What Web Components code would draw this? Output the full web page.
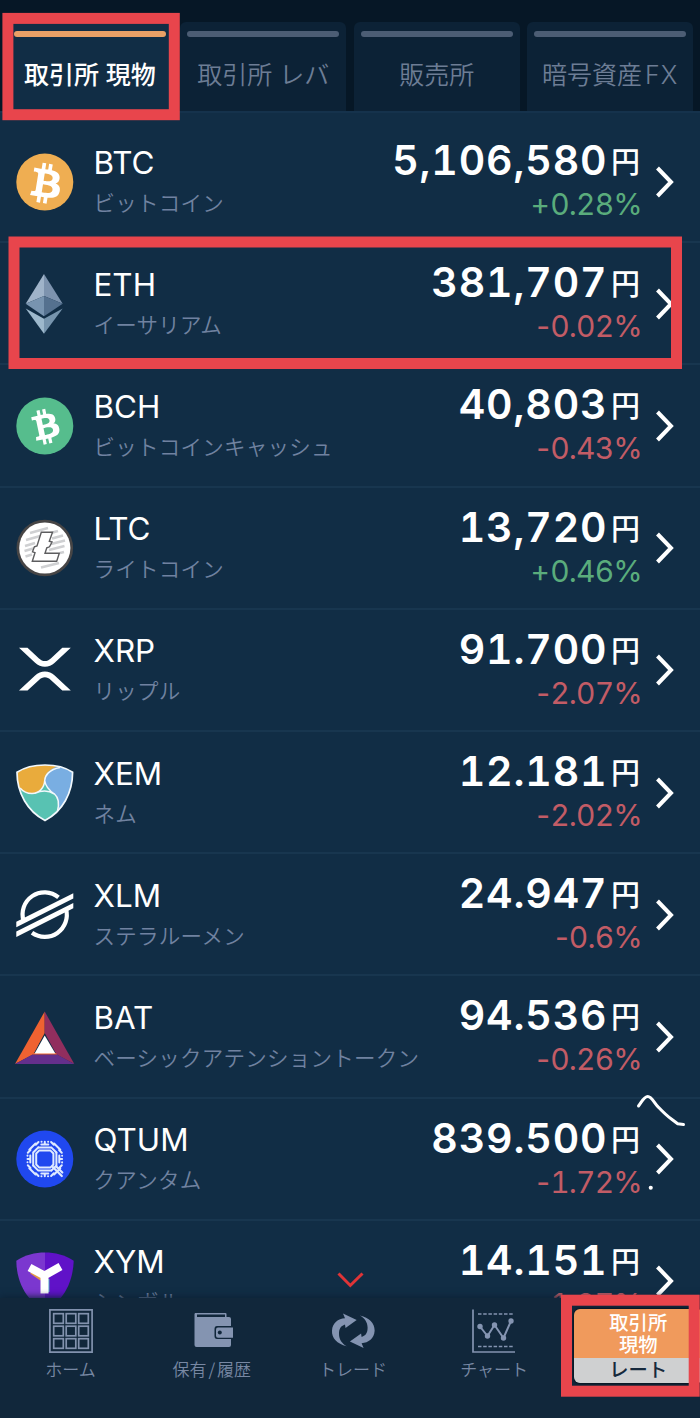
<!DOCTYPE html>
<html lang="ja">
<head>
<meta charset="UTF-8">
<title>レート</title>
<style>
    html, body { margin:0; padding:0; }
    body {
        width:700px;
        height:1418px;
        overflow:hidden;
        background:#112d45;
        color:#fff;
        font-family:Inter, "Noto Sans CJK JP", sans-serif;
    }
</style>
</head>
<body>
<rate-app>
    <rate-tab slot="tabs" active>取引所 現物</rate-tab>
    <rate-tab slot="tabs">取引所 レバ</rate-tab>
    <rate-tab slot="tabs">販売所</rate-tab>
    <rate-tab slot="tabs">暗号資産<span style="letter-spacing:1px;margin-left:3px">FX</span></rate-tab>

    <rate-row code="BTC" name="ビットコイン" price="5,106,580" rate="+0.28%"></rate-row>
    <rate-row code="ETH" name="イーサリアム" price="381,707" rate="-0.02%"></rate-row>
    <rate-row code="BCH" name="ビットコインキャッシュ" price="40,803" rate="-0.43%"></rate-row>
    <rate-row code="LTC" name="ライトコイン" price="13,720" rate="+0.46%"></rate-row>
    <rate-row code="XRP" name="リップル" price="91.700" rate="-2.07%"></rate-row>
    <rate-row code="XEM" name="ネム" price="12.181" rate="-2.02%"></rate-row>
    <rate-row code="XLM" name="ステラルーメン" price="24.947" rate="-0.6%"></rate-row>
    <rate-row code="BAT" name="ベーシックアテンショントークン" price="94.536" rate="-0.26%"></rate-row>
    <rate-row code="QTUM" name="クアンタム" price="839.500" rate="-1.72%"></rate-row>
    <rate-row code="XYM" name="シンボル" price="14.151" rate="-1.27%"></rate-row>

    <nav-item slot="nav" icon="home">ホーム</nav-item>
    <nav-item slot="nav" icon="wallet">保有<span style="margin:0 2px">/</span>履歴</nav-item>
    <nav-item slot="nav" icon="trade">トレード</nav-item>
    <nav-item slot="nav" icon="chart">チャート</nav-item>
    <mode-button slot="nav"><span>取引所</span><span>現物</span><span slot="mode">レート</span></mode-button>

    <mark-layer slot="marks"></mark-layer>
</rate-app>

<script>
const BITCOIN = 'M23.189 14.02c.314-2.096-1.283-3.223-3.465-3.975l.708-2.84-1.728-.43-.69 2.765c-.454-.114-.92-.22-1.385-.326l.695-2.783L15.596 6l-.708 2.839c-.376-.086-.746-.17-1.104-.26l.002-.009-2.384-.595-.46 1.846s1.283.294 1.256.312c.7.175.826.638.805 1.006l-.806 3.235c.048.012.11.03.18.057l-.183-.045-1.13 4.532c-.086.212-.303.531-.793.41.018.025-1.256-.313-1.256-.313l-.858 1.978 2.25.561c.418.105.828.215 1.231.318l-.715 2.872 1.727.43.708-2.84c.472.127.93.245 1.378.357l-.706 2.828 1.728.43.715-2.866c2.948.558 5.164.333 6.097-2.333.752-2.146-.037-3.385-1.588-4.192 1.13-.26 1.98-1.003 2.207-2.538zm-3.95 5.538c-.533 2.147-4.148.986-5.32.695l.95-3.805c1.172.293 4.929.872 4.37 3.11zm.535-5.569c-.487 1.953-3.495.96-4.47.717l.86-3.45c.975.243 4.118.696 3.61 2.733z';

// one side and one corner of the QTUM pattern, turned four times
const QTUM_SIDE = `
    <path d="M-6.500 -11.600H6.500L11.600 -6.500"/>
    <path d="M-3.500 -14.500L0 -14.500 3.500 -14.500M0 -14.500V-17.300M-3.300 -17.300h.1M3.300 -17.300h.1"/>
    <path d="M6.300 -17L9 -14.300M9.300 -15.500L15.500 -9.300M17 -6.300L14.300 -9"/>
`;

// every coin is drawn on a 60 x 60 board
const COINS = {
    BTC: `<circle cx="29.8" cy="30" r="28.5" fill="#efae52"/>
        <path transform="translate(30.4 30.6) rotate(-5) scale(2.06) translate(-16.1 -15.7)" fill="#fff" d="${BITCOIN}"/>`,
    ETH: `<path fill="#9fb3c9" d="M29 0L10.7 29.8 29 22z"/><path fill="#7d93ae" d="M29 0L47.7 29.8 29 22z"/>
        <path fill="#7894b0" d="M29 22L10.7 29.8 29 42.3z"/><path fill="#55718f" d="M29 22L47.7 29.8 29 42.3z"/>
        <path fill="#9db8cc" d="M10.7 34.6L29 44.8V59.8z"/><path fill="#7795ae" d="M47.7 34.6L29 44.8V59.8z"/>`,
    BCH: `<circle cx="29.8" cy="30" r="28.5" fill="#56bd8d"/>
        <path transform="translate(29.9 30) rotate(-26) scale(1.8) translate(-16.1 -15.7)" fill="#fff" d="${BITCOIN}"/>`,
    LTC: `<circle cx="29.8" cy="30" r="28.3" fill="#474545"/><circle cx="29.8" cy="30" r="25.6" fill="#fff"/>
        <g stroke="#cfd0d2" stroke-width="2.6" fill="none">
            <path d="M15 15L33 10M11 22L43 13M10 28L20 25M37 20.5L48 17.5M9.5 33L19 30.3M36 26L50 22.5M10.5 38.5L17 36.5M34 32L49.5 28M45 35L49 34M26 49.5L44 45"/>
        </g>
        <path fill="#fff" stroke="#5d5d5f" stroke-width="1.4" d="M26.3 14.3H37.5L34.3 23.2 37 24 34.5 28.8 31.8 29.8 30 35.2H44.3L41.7 43.3H17.3L20 34.6 17.5 33.8 19.4 28.8 22 28z"/>`,
    XRP: `<g fill="#fff"><path d="M4 7.7H12.5L24 18.4C27.5 21.8 32.3 21.8 35.8 18.4L47.3 7.7H55.8L39.7 22.8C34.2 28.2 25.6 28.2 20.1 22.8z"/>
        <path transform="matrix(1 0 0 -1 0 58.3)" d="M4 7.7H12.5L24 18.4C27.5 21.8 32.3 21.8 35.8 18.4L47.3 7.7H55.8L39.7 22.8C34.2 28.2 25.6 28.2 20.1 22.8z"/></g>`,
    XEM: `<clipPath id="c"><path d="M2 9.3C10 4 20 2 30 2S50 4 57.6 9.3C57.6 30 47.5 48.5 30 57.5 12.500 48.500 2 30 2 9.300z"/></clipPath>
        <g clip-path="url(#c)"><path fill="#58c2b2" d="M0 0H60V60H0z"/>
        <path fill="#79aee2" d="M58 3H41C33 6 30 12 30 17.500 30.500 24 35 28 39.500 31 44 35 44.500 40 42.500 49L60 44V0z"/>
        <path fill="#e9ab3c" d="M44 3C33 6 30 12 29.700 17.500 29.500 24 25 30.500 17 30.500 12 30.500 8.500 29 4 25L0 20V0H36z"/></g>
        <g fill="none" stroke="#f2f8fc" stroke-width="1.500"><path d="M45 4.500C34 6.500 30 12.500 29.700 17.500 29.300 25 24 30.500 17 30.500 12 30.500 8.500 29 5 25M29.700 17.500C30.500 24 35 28 39.500 31 44 35 44.500 40 42.500 48M20 30.300C27 27 34 27.500 39.500 31"/>
        <path stroke-width="1.700" d="M2 9.3C10 4 20 2 30 2S50 4 57.6 9.3C57.6 30 47.5 48.5 30 57.5 12.500 48.500 2 30 2 9.300z"/></g>`,
    XLM: `<g fill="none" stroke="#fff" stroke-width="4.2"><path d="M8.600 36A22 22 0 0 1 43.500 12.300"/><path d="M51 24A22 22 0 0 1 17 47.800"/></g>
        <path fill="#fff" d="M1.300 36.800L58.300 8.300V13.500L1.300 42.200zM1.300 46.600L58.300 18V23.300L1.300 52z"/>`,
    BAT: `<path fill="#ef6231" d="M29.700 4.500L0 57 18 47.500 29.700 26z"/><path fill="#912e5e" d="M29.700 4.500L59.300 57 41.500 47.500 29.700 26z"/>
        <path fill="#642f8c" d="M0 57H59.300L41.500 47.300H18z"/><path fill="#ef6231" d="M29.700 25L17.500 47.500H42L41 46H19z"/><path fill="#fff" d="M29.700 28.500L19.600 46.500H40.400z"/>`,
    QTUM: `<circle cx="29.800" cy="30" r="28.5" fill="#2048ef"/>
        <g transform="translate(29.800 30)" fill="none" stroke="#dfeaff" stroke-width="2" stroke-linecap="round">
        <path d="M-8.600 -5.500L-5.500 -8.600H5.500L8.600 -5.500V5.500L5.500 8.600H-5.500L-8.600 5.500z"/>
        ${[0, 90, 180, 270].map(a => `<g transform="rotate(${a})">${QTUM_SIDE}</g>`).join('')}
        <path stroke-width="2.200" d="M8 8L17 17M11.500 7.500L17.500 13.500"/></g>`,
    XYM: `<clipPath id="s"><path d="M1.300 9.700C10 4 20 1.500 30 1.500S50 4 58.700 9.700C58 32 48 50 30 60 12 50 1.500 32 1.300 9.700z"/></clipPath>
        <g clip-path="url(#s)"><path fill="#7b37cf" d="M0 0H30V60H0z"/><path fill="#6012c8" d="M30 0H60V60H30z"/></g>
        <path fill="none" stroke="#e29a45" stroke-width="6" d="M17 20L27 27"/><path fill="none" stroke="#4ea3c4" stroke-width="6" d="M42 17L34 22M31.500 28V41"/>
        <path fill="none" stroke="#fff" stroke-width="8" stroke-linejoin="round" d="M14.500 16.500L29.500 24.500 45.500 15.500M29.500 23V42.500"/>`
};

const ARROW = 'M15.700 37.200C6 35 .5 29 1 21.500 1.500 14 7 9.800 14 9.300L12 4.500 25.700 11 14.500 19 14 15.500C9.500 17 8 20 8 25 8 30.500 11 34.500 15.700 37.200z';

const NAV_ICONS = {
    home: `<g fill="none" stroke="#8292ae" stroke-width="1.700"><path d="M.9 .9H43.100V43.100H.9z"/>
        ${[4.700, 17.200, 29.700].map(y => [4.700, 17.200, 29.700].map(x => `<rect x="${x}" y="${y}" width="9.600" height="9.600"/>`).join('')).join('')}</g>`,
    wallet: `<path fill="#8494b1" d="M5 4H35.500Q36.500 4 36.500 5V8H39Q41 8 41 10V17H27Q24.500 17 24.500 20V27Q24.500 30 27 30H41V36Q41 38 39 38H6.500Q4.500 38 4.500 36V5z"/>
        <path fill="#11273b" d="M7 5.500H35V8H7z"/>
        <path fill="#8494b1" d="M28 18.500H43V28.700H28Q26 28.700 26 26.700V20.500Q26 18.500 28 18.500z"/><circle cx="29.800" cy="23.600" r="2" fill="#11273b"/>`,
    trade: `<g fill="#8494b1"><path d="${ARROW}"/><path transform="rotate(180 22.300 21.800)" d="${ARROW}"/></g>`,
    chart: `<g fill="none" stroke="#8494b1" stroke-width="1.700"><path d="M1 .5V43H43"/><path stroke-dasharray="3.500 1.700" d="M6 5H42M6 37.500H42"/>
        <path stroke-width="2" d="M8 17.500L15.500 27 22.500 16 31.500 29 39 12"/></g>
        <g fill="#8494b1"><circle cx="8" cy="17.500" r="2.700"/><circle cx="15.500" cy="27" r="2.700"/><circle cx="22.500" cy="16" r="2.700"/><circle cx="31.500" cy="29" r="2.700"/><circle cx="39" cy="12" r="2.700"/></g>`
};

class RateApp extends HTMLElement {
    connectedCallback(){
        this.attachShadow({mode : 'open'});
        this.shadowRoot.innerHTML = `
        <header><slot name="tabs"></slot></header>
        <main><slot></slot></main>
        <nav><slot name="nav"></slot></nav>
        <slot name="marks"></slot>
        <style>
            :host {
                display:flex;
                flex-direction:column;
                position:relative;
                width:700px;
                height:1418px;
                overflow:hidden;
            }
            header {
                flex:none;
                box-sizing:border-box;
                height:111px;
                padding:22px 7px 0;
                display:flex;
                gap:7.500px;
                background:#061726;
            }
            main {
                flex:1;
                min-height:0;
                overflow:hidden;
                border-top:2px solid #15324c;
                padding-top:8px;
                background:#112d45;
            }
            nav {
                flex:none;
                box-sizing:border-box;
                height:120px;
                padding-top:11px;
                display:flex;
                align-items:flex-start;
                background:#11273b;
                box-shadow:0 -1px 7px #0c2135;
                position:relative;
            }
        </style>
        `
    }
}

class RateTab extends HTMLElement {
    connectedCallback(){
        this.attachShadow({mode : 'open'});
        this.shadowRoot.innerHTML = `
        <i></i>
        <span><slot></slot></span>
        <style>
            :host {
                flex:1;
                display:flex;
                flex-direction:column;
                align-items:stretch;
                padding:9px 7px 0;
                background:#0c2236;
                border-radius:6px 6px 0 0;
                color:#6d7d95;
                font-family:Inter, "Noto Sans CJK JP", sans-serif;
                font-size:25px;
                font-weight:350;
                white-space:nowrap;
            }
            :host([active]) {
                background:#112d45;
                color:#fff;
                font-weight:500;
            }
            i {
                height:5.500px;
                border-radius:3px;
                background:#4c5d74;
            }
            :host([active]) i { background:#e9a066; }
            span {
                line-height:40px;
                margin:18px -6px 0;
                text-align:center;
            }
        </style>
        `
    }
}

class CoinIcon extends HTMLElement {
    connectedCallback(){
        let coin=this.getAttribute('coin') ?? 'BTC';
        this.attachShadow({mode : 'open'});
        this.shadowRoot.innerHTML = `
        <svg viewBox="0 0 60 60" width="60" height="60">${COINS[coin]}</svg>
        <style>
            :host { display:block; width:60px; height:60px; }
            svg { display:block; }
        </style>
        `
    }
}

class RateRow extends HTMLElement {
    connectedCallback(){
        let code=this.getAttribute('code') ?? '';
        let name=this.getAttribute('name') ?? '';
        let price=this.getAttribute('price') ?? '';
        let rate=this.getAttribute('rate') ?? '';
        let color=rate.startsWith('+') ? '#5aac7c' : '#c25c66';
        this.attachShadow({mode : 'open'});
        this.shadowRoot.innerHTML = `
        <coin-icon coin="${code}"></coin-icon>
        <div class="coin">
            <div class="code">${code}</div>
            <div class="name">${name}</div>
        </div>
        <div class="value">
            <div class="price">${price}<span>円</span></div>
            <div class="rate"><span>${rate[0]}</span>${rate.slice(1)}</div>
        </div>
        <svg width="22" height="36" viewBox="0 0 22 36">
            <path d="M3.500 4L17 18 3.500 32" fill="none" stroke="#fff" stroke-width="4"/>
        </svg>
        <style>
            :host {
                display:flex;
                align-items:center;
                box-sizing:border-box;
                height:122.200px;
                padding:1px 24px 0 15px;
                border-bottom:2px solid #18364f;
            }
            .coin { margin-left:18.500px; }
            .code {
                line-height:40px;
                padding-top:1px;
                font-size:31.400px;
                font-weight:400;
            }
            .name {
                line-height:37px;
                padding-bottom:2px;
                font-family:"Noto Sans CJK JP", sans-serif;
                font-size:21.500px;
                font-weight:350;
                letter-spacing:.25px;
                color:#7082a0;
                white-space:nowrap;
            }
            .value {
                flex:1;
                padding-top:1px;
                text-align:right;
                white-space:nowrap;
                font-variant-numeric:tabular-nums;
            }
            .price {
                line-height:44px;
                font-size:41px;
                font-weight:600;
                letter-spacing:.85px;
            }
            .price span {
                margin:0 2px 0 3.500px;
                font-family:"Noto Sans CJK JP", sans-serif;
                font-size:29px;
                font-weight:500;
                line-height:1;
                letter-spacing:0;
                vertical-align:2px;
            }
            .rate {
                line-height:44px;
                font-size:30px;
                font-weight:400;
                letter-spacing:-.8px;
                color:${color};
            }
            .rate span {
                font-variant-numeric:normal;
                letter-spacing:0;
            }
            svg { margin-left:12px; }
        </style>
        `
    }
}

class NavItem extends HTMLElement {
    connectedCallback(){
        let icon=this.getAttribute('icon') ?? 'home';
        this.attachShadow({mode : 'open'});
        this.shadowRoot.innerHTML = `
        <svg width="44" height="44" viewBox="0 0 44 44">${NAV_ICONS[icon]}</svg>
        <span><slot></slot></span>
        <style>
            :host {
                flex:none;
                display:flex;
                flex-direction:column;
                align-items:center;
                width:141.200px;
                color:#7888a3;
                font-family:"Noto Sans CJK JP", sans-serif;
                font-size:17px;
                font-weight:350;
                white-space:nowrap;
            }
            span { line-height:32px; }
        </style>
        `
    }
}

class ModeButton extends HTMLElement {
    connectedCallback(){
        this.attachShadow({mode : 'open'});
        this.shadowRoot.innerHTML = `
        <div class="market"><slot></slot></div>
        <div class="mode"><slot name="mode"></slot></div>
        <style>
            :host {
                flex:none;
                width:129px;
                height:74px;
                margin-left:9px;
                border-radius:6px;
                overflow:hidden;
                display:flex;
                flex-direction:column;
                font-family:"Liberation Sans", "Noto Sans CJK JP", sans-serif;
                font-size:19.300px;
                font-weight:500;
                text-align:center;
                box-shadow:0 0 3px #000;
            }
            .market {
                display:flex;
                flex-direction:column;
                height:49px;
                padding-top:4px;
                box-sizing:border-box;
                line-height:22px;
                background:#f09a5c;
            }
            .mode {
                flex:1;
                padding-top:1px;
                line-height:24px;
                background:#cfd0d1;
                color:#17293c;
            }
        </style>
        `
    }
}

// hand-drawn marks and frames over the list
class MarkLayer extends HTMLElement {
    connectedCallback(){
        this.attachShadow({mode : 'open'});
        this.shadowRoot.innerHTML = `
        <svg width="700" height="1418" viewBox="0 0 700 1418" fill="none">
            <path d="M338.500 1273.500L350.300 1285.500 362.500 1273.500" stroke="#df3437" stroke-width="3"/>
            <g stroke="#fff" stroke-width="3" stroke-linecap="round" stroke-linejoin="round">
                <path d="M638.500 1106C642 1101.500 644 1096.500 647.700 1096.500 652 1096.500 654 1103 658.500 1107.300 662 1111 667 1116 671.700 1119.300L677.700 1123.800 683.500 1124.500"/>
                <path d="M650.700 1187.700h.1" stroke-width="4"/>
            </g>
            <g stroke="#e8454c" stroke-width="11">
                <rect x="7.900" y="18.400" width="166.400" height="96.300"/>
                <rect x="14" y="242" width="662.500" height="121.500"/>
                <rect x="566.500" y="1300.200" width="127.700" height="91"/>
            </g>
        </svg>
        <style>
            :host { position:absolute; inset:0; pointer-events:none; }
            svg { display:block; }
        </style>
        `
    }
}

customElements.define("coin-icon", CoinIcon);
customElements.define("rate-tab", RateTab);
customElements.define("rate-row", RateRow);
customElements.define("nav-item", NavItem);
customElements.define("mode-button", ModeButton);
customElements.define("mark-layer", MarkLayer);
customElements.define("rate-app", RateApp);
</script>
</body>
</html>
